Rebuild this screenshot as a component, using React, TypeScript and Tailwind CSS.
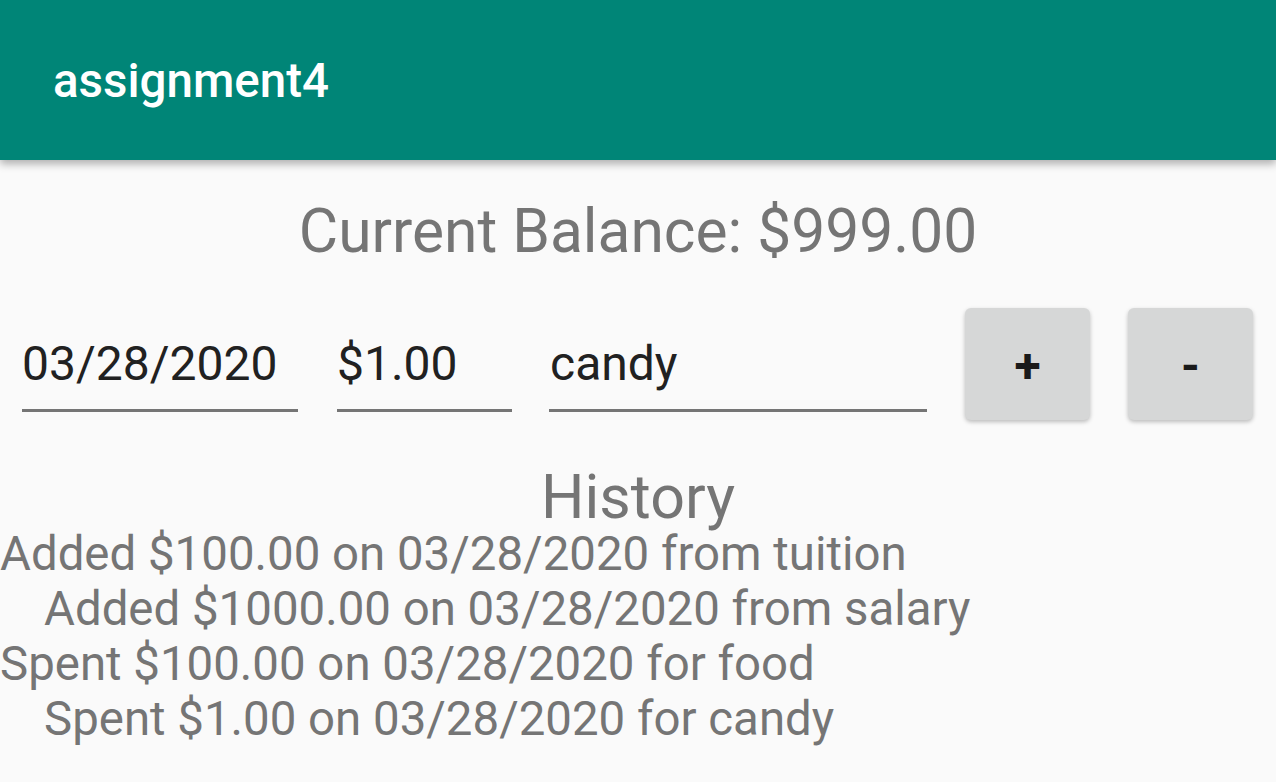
import React from "react";

export default function App() {
  const history = [
    { text: "Added $100.00 on 03/28/2020 from tuition", indent: false },
    { text: "Added $1000.00 on 03/28/2020 from salary", indent: true },
    { text: "Spent $100.00 on 03/28/2020 for food", indent: false },
    { text: "Spent $1.00 on 03/28/2020 for candy", indent: true },
  ];
  return (
    <div
      className="w-[1276px] h-[782px] bg-[#fafafa] overflow-hidden flex flex-col"
      style={{ fontFamily: "Roboto, 'Noto Sans', sans-serif" }}
    >
      <div className="h-[160px] bg-[#008577] flex items-center pl-[53px] shadow-[0_4px_8px_rgba(0,0,0,0.3)] relative z-10 shrink-0">
        <span className="text-white text-[47.5px] font-medium leading-none mt-[4px]">assignment4</span>
      </div>
      <div className="flex justify-center mt-[34px]">
        <span className="text-[#757575] text-[60.5px] leading-[76px]">Current Balance: $999.00</span>
      </div>
      <div className="flex items-start mt-[37px] pl-[22px]">
        <div className="w-[276px] border-b-[3px] border-[#757575] h-[105px] flex items-end pb-[21px]">
          <span className="text-[#212121] text-[48px] leading-none">03/28/2020</span>
        </div>
        <div className="w-[175px] ml-[39px] border-b-[3px] border-[#757575] h-[105px] flex items-end pb-[21px]">
          <span className="text-[#212121] text-[48px] leading-none">$1.00</span>
        </div>
        <div className="w-[378px] ml-[37px] border-b-[3px] border-[#757575] h-[105px] flex items-end pb-[21px] pl-[1px]">
          <span className="text-[#212121] text-[48px] leading-none">candy</span>
        </div>
        <button className="ml-[38px] mt-[1px] w-[125px] h-[112px] rounded-[6px] bg-[#d6d7d7] shadow-[0_2px_4px_rgba(0,0,0,0.25)] flex items-center justify-center text-[#1a1a1a] text-[48px] font-bold leading-none pt-[4px]">
          +
        </button>
        <button className="ml-[38px] mt-[1px] w-[125px] h-[112px] rounded-[6px] bg-[#d6d7d7] shadow-[0_2px_4px_rgba(0,0,0,0.25)] flex items-center justify-center text-[#1a1a1a] text-[48px] font-bold leading-none pt-[4px]">
          -
        </button>
      </div>
      <div className="flex justify-center mt-[45px]">
        <span className="text-[#757575] text-[61px] leading-[64px]">History</span>
      </div>
      <div className="flex flex-col -mt-[2px]">
        {history.map((h, i) => (
          <div
            key={i}
            className={`text-[#757575] text-[47.4px] leading-[55px] whitespace-nowrap ${h.indent ? "pl-[44px]" : ""}`}
          >
            {h.text}
          </div>
        ))}
      </div>
    </div>
  );
}
